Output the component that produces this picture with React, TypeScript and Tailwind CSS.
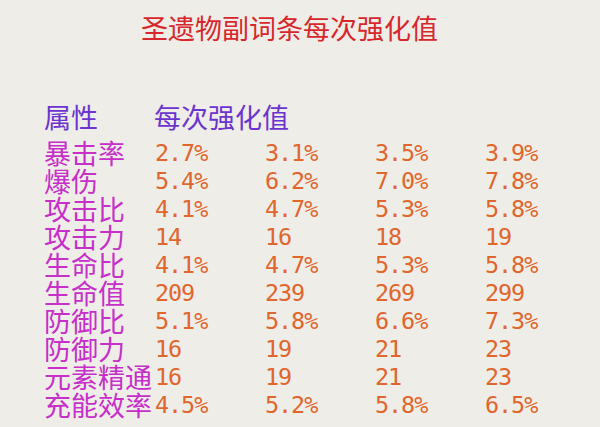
const rows: [string, string[]][] = [
  ["暴击率", ["2.7%", "3.1%", "3.5%", "3.9%"]],
  ["爆伤", ["5.4%", "6.2%", "7.0%", "7.8%"]],
  ["攻击比", ["4.1%", "4.7%", "5.3%", "5.8%"]],
  ["攻击力", ["14", "16", "18", "19"]],
  ["生命比", ["4.1%", "4.7%", "5.3%", "5.8%"]],
  ["生命值", ["209", "239", "269", "299"]],
  ["防御比", ["5.1%", "5.8%", "6.6%", "7.3%"]],
  ["防御力", ["16", "19", "21", "23"]],
  ["元素精通", ["16", "19", "21", "23"]],
  ["充能效率", ["4.5%", "5.2%", "5.8%", "6.5%"]],
];

const cjk = "font-['Noto_Sans_CJK_SC',sans-serif]";

export default function App() {
  return (
    <div className="w-[600px] h-[427px] overflow-hidden bg-[#eeede8]">
      {/* Title */}
      <div className={`pt-[14px] pl-[141px] text-[27px] leading-[28px] text-[#d8272c] ${cjk}`}>
        圣遗物副词条每次强化值
      </div>

      {/* Header */}
      <div className={`mt-[61px] flex pl-[44px] text-[27px] leading-[28px] text-[#6b34cf] ${cjk}`}>
        <div className="w-[110px]">属性</div>
        <div>每次强化值</div>
      </div>

      {/* Table */}
      <div className="mt-[8px] flex flex-col pl-[44px]">
        {rows.map(([name, vals]) => (
          <div key={name} className="flex h-[28px] items-center">
            <div className={`w-[111px] whitespace-nowrap text-[27px] leading-[28px] text-[#c62fc8] ${cjk}`}>
              {name}
            </div>
            {vals.map((v, i) => (
              <div
                key={i}
                className="w-[110px] font-['DejaVu_Sans_Mono',monospace] text-[23.5px] leading-[28px] tracking-[-1.1px] text-[#e0662e]"
              >
                {v}
              </div>
            ))}
          </div>
        ))}
      </div>
    </div>
  );
}
